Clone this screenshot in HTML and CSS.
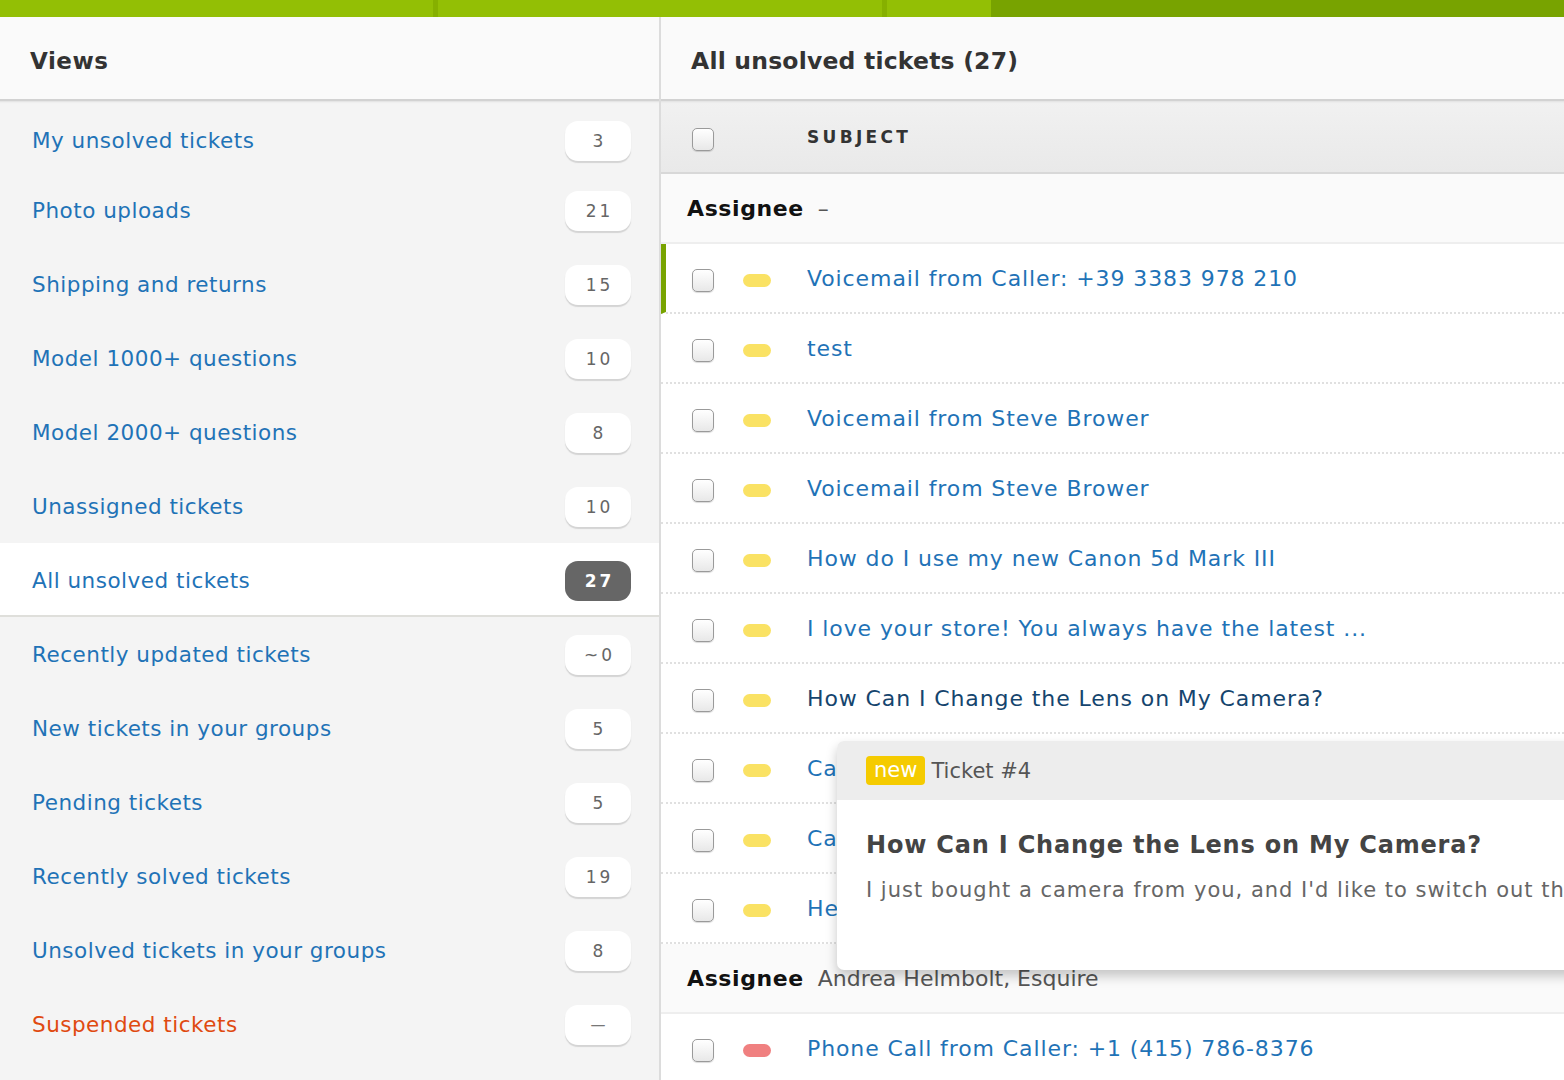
FILE: index.html
```html
<!DOCTYPE html>
<html>

<head>
    <title>Views - All unsolved tickets</title>
    <meta name="viewport" content="width=device-width,initial-scale=1" />
    <link rel="stylesheet" href="styles.css">
</head>

<body>
    <div class="topbar">
        <span class="seg seg-a"></span>
        <span class="seg seg-b"></span>
        <span class="seg seg-c"></span>
        <span class="seg seg-d"></span>
    </div>

    <div class="app">
        <aside class="sidebar">
            <h1 class="pane-title">Views</h1>
            <ul class="views">
                <li><a href="#">My unsolved tickets</a><span class="count">3</span></li>
                <li><a href="#">Photo uploads</a><span class="count">21</span></li>
                <li><a href="#">Shipping and returns</a><span class="count">15</span></li>
                <li><a href="#">Model 1000+ questions</a><span class="count">10</span></li>
                <li><a href="#">Model 2000+ questions</a><span class="count">8</span></li>
                <li><a href="#">Unassigned tickets</a><span class="count">10</span></li>
                <li class="active"><a href="#">All unsolved tickets</a><span class="count">27</span></li>
                <li><a href="#">Recently updated tickets</a><span class="count">~0</span></li>
                <li><a href="#">New tickets in your groups</a><span class="count">5</span></li>
                <li><a href="#">Pending tickets</a><span class="count">5</span></li>
                <li><a href="#">Recently solved tickets</a><span class="count">19</span></li>
                <li><a href="#">Unsolved tickets in your groups</a><span class="count">8</span></li>
                <li class="suspended"><a href="#">Suspended tickets</a><span class="count dash">&mdash;</span></li>
            </ul>
        </aside>

        <main class="content">
            <h1 class="pane-title">All unsolved tickets (27)</h1>

            <div class="table-head">
                <span class="check"></span>
                <span class="col-subject">SUBJECT</span>
            </div>

            <div class="group"><b>Assignee</b> <span>&ndash;</span></div>

            <div class="row current"><span class="check"></span><span class="tag"></span><a href="#">Voicemail from Caller: +39 3383 978 210</a></div>
            <div class="row"><span class="check"></span><span class="tag"></span><a href="#">test</a></div>
            <div class="row"><span class="check"></span><span class="tag"></span><a href="#">Voicemail from Steve Brower</a></div>
            <div class="row"><span class="check"></span><span class="tag"></span><a href="#">Voicemail from Steve Brower</a></div>
            <div class="row"><span class="check"></span><span class="tag"></span><a href="#">How do I use my new Canon 5d Mark III</a></div>
            <div class="row"><span class="check"></span><span class="tag"></span><a href="#">I love your store! You always have the latest ...</a></div>
            <div class="row"><span class="check"></span><span class="tag"></span><a href="#" class="hover">How Can I Change the Lens on My Camera?</a></div>
            <div class="row"><span class="check"></span><span class="tag"></span><a href="#">Can I get a discount on a second camera?</a></div>
            <div class="row"><span class="check"></span><span class="tag"></span><a href="#">Can you ship to Canada?</a></div>
            <div class="row"><span class="check"></span><span class="tag"></span><a href="#">Help with my order</a></div>

            <div class="group"><b>Assignee</b> <span>Andrea Helmbolt, Esquire</span></div>

            <div class="row"><span class="check"></span><span class="tag urgent"></span><a href="#">Phone Call from Caller: +1 (415) 786-8376</a></div>

            <div class="preview">
                <div class="preview-head"><span class="status">new</span> Ticket #4</div>
                <div class="preview-body">
                    <h2>How Can I Change the Lens on My Camera?</h2>
                    <p>I just bought a camera from you, and I'd like to switch out the lens for a wider one.</p>
                </div>
            </div>
        </main>
    </div>
</body>

</html>
```

FILE: styles.css
```css
* {
    box-sizing: border-box;
}

html,
body {
    height: 100%;
}

body {
    margin: 0;
    overflow: hidden;
    font-family: "DejaVu Sans", "Liberation Sans", sans-serif;
    color: #333;
    background: #fff;
}

a {
    text-decoration: none;
    color: #1f73b7;
}

.topbar {
    display: flex;
    height: 17px;
}

.seg {
    height: 100%;
    background: #93bf05;
}

.seg-a {
    width: 438px;
    border-right: 5px solid #86b000;
}

.seg-b {
    width: 449px;
    border-right: 5px solid #86b000;
}

.seg-c {
    width: 104px;
}

.seg-d {
    flex: 1;
    background: #78a300;
}

.app {
    display: flex;
    height: calc(100% - 17px);
}

.pane-title {
    margin: 0;
    height: 84px;
    padding: 5px 30px 0;
    display: flex;
    align-items: center;
    font-size: 23px;
    font-weight: bold;
    letter-spacing: 0.5px;
    color: #333;
    background: #fafafa;
    border-bottom: 2px solid #d2d2d2;
}

/* sidebar */

.sidebar {
    width: 661px;
    flex: none;
    background: #f4f4f4;
    border-right: 2px solid #dcdcdc;
}

.views {
    list-style: none;
    margin: 0;
    padding: 0;
    box-shadow: inset 0 3px 2px -2px #e0e0e0;
}

.views li {
    display: flex;
    align-items: center;
    justify-content: space-between;
    height: 74px;
    padding: 0 28px 0 32px;
    font-size: 21.5px;
    letter-spacing: 0.5px;
}

.views li:first-child {
    height: 72px;
    padding-top: 6px;
}

.views li.active {
    background: #fff;
    border-bottom: 2px solid #dfdfdb;
    padding-top: 2px;
}

.views li.suspended a {
    color: #e04a10;
}

.count {
    width: 66px;
    height: 40px;
    margin-top: 2px;
    border-radius: 13px;
    background: #fff;
    box-shadow: 0 2px 1px #d4d4d4;
    color: #666;
    font-size: 17px;
    letter-spacing: 3px;
    text-indent: 3px;
    display: flex;
    align-items: center;
    justify-content: center;
}

.count.dash {
    letter-spacing: 0;
    text-indent: 0;
    font-size: 15px;
    color: #777;
}

.active .count {
    background: #666;
    color: #fff;
    font-weight: bold;
    box-shadow: none;
}

/* ticket list */

.content {
    flex: 1;
    position: relative;
    overflow: hidden;
    background: #fff;
}

.content .pane-title {
    font-size: 23.5px;
    letter-spacing: 0.2px;
}

.table-head {
    display: flex;
    align-items: center;
    height: 73px;
    padding-left: 31px;
    background: linear-gradient(#f1f1f1, #e9e9e9);
    border-bottom: 2px solid #d8d8d8;
    box-shadow: inset 0 3px 2px -2px #e0e0e0;
}

.table-head .check {
    margin-top: 6px;
}

.col-subject {
    margin-left: 93px;
    font-size: 17px;
    font-weight: bold;
    letter-spacing: 3.3px;
    color: #333;
}

.check {
    width: 22px;
    height: 23px;
    flex: none;
    margin-top: 4px;
    border: 1px solid #9a9a9a;
    border-radius: 5px;
    background: linear-gradient(#fff, #e8e8e8);
    box-shadow: 0 1px 1px rgba(0, 0, 0, 0.15);
}

.group {
    display: flex;
    align-items: center;
    gap: 14px;
    height: 70px;
    padding-left: 26px;
    background: #fafafa;
    border-bottom: 2px solid #eee;
    font-size: 22px;
    color: #555;
}

.group b {
    font-weight: 600;
    color: #111;
    letter-spacing: 0.6px;
}

.row {
    display: flex;
    align-items: center;
    height: 70px;
    padding-left: 31px;
    border-bottom: 2px dotted #e0e0e0;
    font-size: 22px;
    letter-spacing: 0.9px;
}

.row.current {
    border-left: 5px solid #78a300;
    padding-left: 26px;
}

.tag {
    width: 28px;
    height: 13px;
    margin: 4px 36px 0 29px;
    border-radius: 7px;
    background: #fae264;
}

.tag.urgent {
    background: #f08080;
}

.row a.hover {
    color: #15456e;
}

/* hover preview */

.preview {
    position: absolute;
    left: 176px;
    top: 724px;
    width: 900px;
    height: 229px;
    border-radius: 7px 0 0 7px;
    background: #fff;
    box-shadow: 0 6px 12px rgba(0, 0, 0, 0.22);
    overflow: hidden;
}

.preview-head {
    height: 59px;
    display: flex;
    align-items: center;
    gap: 6px;
    padding-left: 29px;
    background: #ededed;
    font-size: 21px;
    color: #555;
}

.status {
    background: #f5cb00;
    color: #fff;
    border-radius: 4px;
    padding: 2px 8px;
    line-height: 25px;
}

.preview-body {
    padding: 31px 29px;
}

.preview-body h2 {
    margin: 0 0 19px;
    font-size: 24px;
    letter-spacing: 0.8px;
    color: #444;
}

.preview-body p {
    margin: 0;
    font-size: 21px;
    letter-spacing: 1px;
    color: #666;
    white-space: nowrap;
}
```
